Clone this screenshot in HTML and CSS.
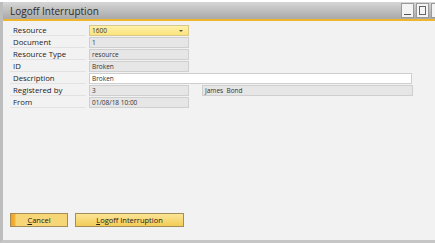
FILE: index.html
```html
<!DOCTYPE html>
<html lang="en">
<head>
  <meta charset="UTF-8" />
  <title>Logoff Interruption</title>
  <link rel="stylesheet" href="styles.css">
</head>
<body>
  <div class="window">
    <div class="titlebar">
      <span class="title">Logoff Interruption</span>
      <div class="win-buttons">
        <span class="wbtn"><span class="min"></span></span>
        <span class="wbtn"><span class="max"></span></span>
        <span class="wbtn"></span>
      </div>
    </div>

    <div class="body">
      <div class="form">
        <div class="row">
          <span class="label">Resource</span>
          <span class="field combo">1600<span class="arrow"></span></span>
        </div>
        <div class="row">
          <span class="label">Document</span>
          <span class="field">1</span>
        </div>
        <div class="row">
          <span class="label">Resource Type</span>
          <span class="field">resource</span>
        </div>
        <div class="row">
          <span class="label">ID</span>
          <span class="field">Broken</span>
        </div>
        <div class="row">
          <span class="label">Description</span>
          <span class="field wide">Broken</span>
        </div>
        <div class="row">
          <span class="label">Registered by</span>
          <span class="field">3</span>
          <span class="field name">James&nbsp; Bond</span>
        </div>
        <div class="row">
          <span class="label">From</span>
          <span class="field">01/08/18 10:00</span>
        </div>
      </div>

      <div class="actions">
        <button class="btn cancel"><u>C</u>ancel</button>
        <button class="btn logoff"><u>L</u>ogoff Interruption</button>
      </div>
    </div>
  </div>
</body>
</html>
```

FILE: styles.css
```css
html, body {
  margin: 0;
  padding: 0;
  background: #ffffff;
}
body {
  font-family: "Open Sans", "DejaVu Sans", sans-serif;
  width: 435px;
  height: 243px;
  overflow: hidden;
}
.window {
  margin-top: 2px;
  height: 238px;
  border-left: 3px solid #bdbdbd;
  border-bottom: 3px solid #c6c6c6;
  background: #f2f2f2;
  display: flex;
  flex-direction: column;
}
.titlebar {
  height: 17px;
  background: linear-gradient(#d6d6d6, #a8a8a8);
  border-bottom: 2px solid #f1b52c;
  display: flex;
  align-items: center;
  justify-content: space-between;
  padding-left: 7px;
  overflow: hidden;
}
.title {
  font-size: 10px;
  color: #2c2c2c;
}
.win-buttons {
  display: flex;
  gap: 2px;
  align-self: flex-end;
  margin-bottom: 1px;
  margin-right: -9px;
}
.wbtn {
  width: 11px;
  height: 13px;
  background: #f4f4f4;
  border: 1px solid #9a9a9a;
  position: relative;
}
.min {
  position: absolute;
  left: 2px;
  bottom: 2px;
  width: 7px;
  height: 1px;
  background: #555;
}
.max {
  position: absolute;
  left: 2px;
  top: 2px;
  width: 5px;
  height: 7px;
  border: 1px solid #666;
}
.body {
  flex: 1;
  display: flex;
  flex-direction: column;
  justify-content: space-between;
  padding: 4px 0 13px 7px;
}
.form {
  display: flex;
  flex-direction: column;
  gap: 1px;
}
.row {
  display: flex;
  align-items: center;
  height: 11px;
}
.label {
  width: 73px;
  height: 10px;
  line-height: 10px;
  padding-left: 3px;
  font-size: 7.8px;
  color: #222;
  border-bottom: 1px solid #e2e2e2;
  margin-right: 3px;
}
.field {
  width: 96px;
  height: 9px;
  line-height: 9px;
  padding-left: 2px;
  font-size: 6.5px;
  color: #333;
  background: #e6e6e6;
  border: 1px solid #cfcfcf;
}
.combo {
  background: linear-gradient(#fff1a8, #fbe37c);
  border-color: #d8c98a;
  position: relative;
}
.arrow {
  position: absolute;
  right: 5px;
  top: 4px;
  border-left: 2.5px solid transparent;
  border-right: 2.5px solid transparent;
  border-top: 2.5px solid #555;
}
.wide {
  width: 319px;
  background: #ffffff;
}
.name {
  width: 207px;
  margin-left: 13px;
}
.actions {
  display: flex;
  gap: 7px;
}
.btn {
  height: 14px;
  padding: 0;
  font-family: "Open Sans", "DejaVu Sans", sans-serif;
  font-size: 7.5px;
  color: #222;
  background: linear-gradient(#fbe597, #f2cc55);
  border: 1px solid #a38d58;
  line-height: 12px;
}
.cancel {
  width: 58px;
  background: linear-gradient(90deg, #f0a020 0, #f4b53a 4px, #f6d677 5px), linear-gradient(#fbe597, #f2cc55);
}
.logoff {
  width: 109px;
}
```
